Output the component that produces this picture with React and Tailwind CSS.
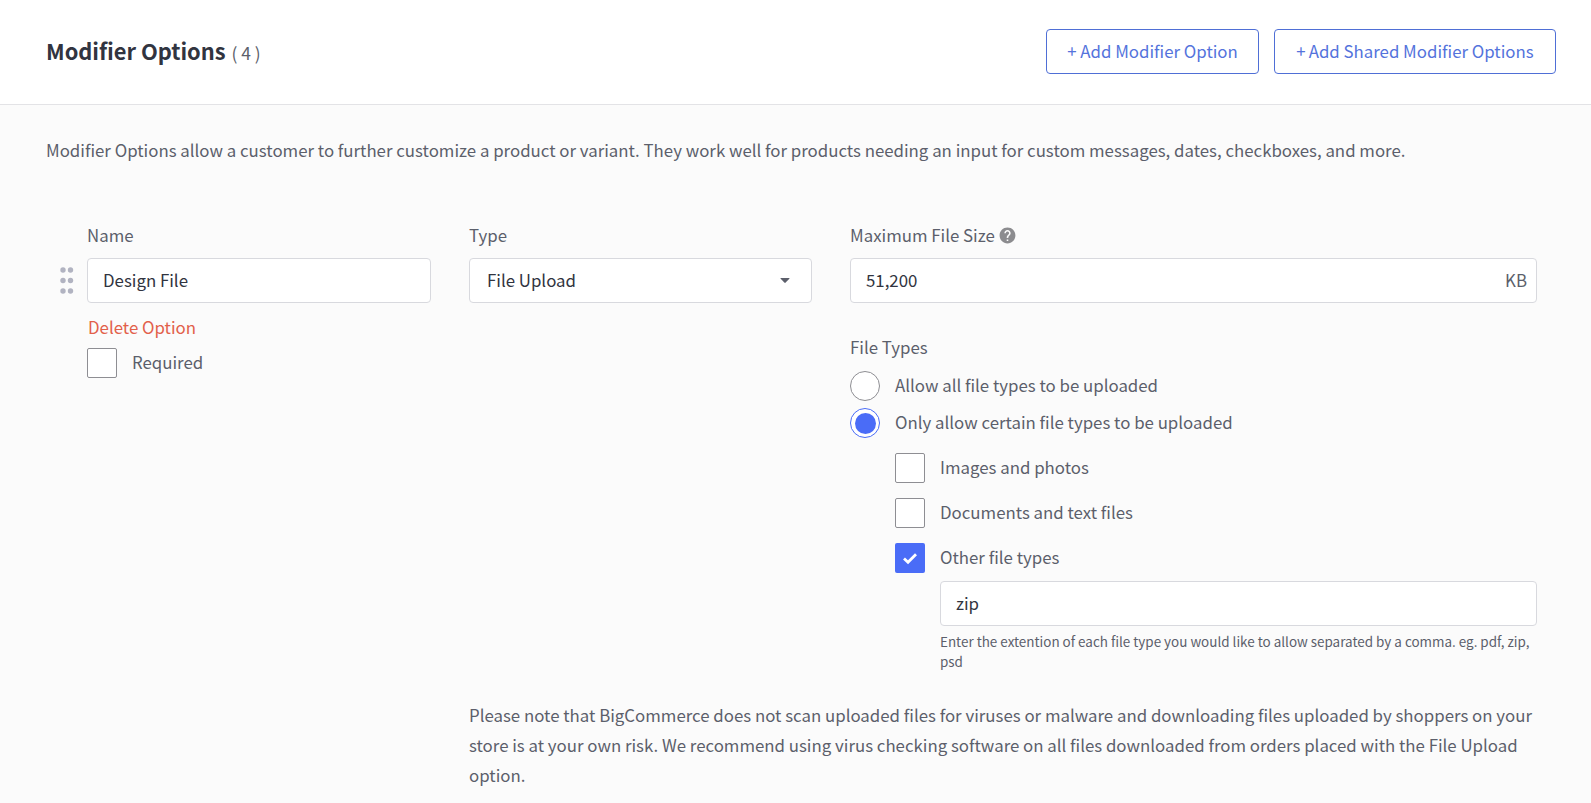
import { MdHelp } from 'react-icons/md';

const TextInput = ({ value, suffix, className = '' }) => (
  <div className={`flex items-center justify-between h-[45px] bg-white border border-[#d8d9de] rounded-[4px] pl-[15px] pr-[9px] text-[#313440] ${className}`}>
    <span className="pb-[2px]">{value}</span>
    {suffix && <span className="pb-[2px] text-[#5c5f6b]">{suffix}</span>}
  </div>
);

const Checkbox = ({ label, checked = false }) => (
  <div className="flex items-center h-[30px] gap-[15px]">
    {checked ? (
      <div className="w-[30px] h-[30px] rounded-[2px] bg-[#4a6cf7] flex items-center justify-center">
        <svg width="16" height="13" viewBox="0 0 16 13" fill="none">
          <path d="M2 6.5 L6 10.2 L14 2.2" stroke="white" strokeWidth="2.8" />
        </svg>
      </div>
    ) : (
      <div className="w-[30px] h-[30px] rounded-[2px] bg-white border border-[#8e8e93]" />
    )}
    <span className="pb-[2px]">{label}</span>
  </div>
);

const Radio = ({ label, selected = false }) => (
  <div className="flex items-center h-[30px] gap-[15px]">
    {selected ? (
      <div className="w-[30px] h-[30px] rounded-full bg-white border border-[#4a6cf7] flex items-center justify-center">
        <div className="w-[21px] h-[21px] rounded-full bg-[#4a6cf7]" />
      </div>
    ) : (
      <div className="w-[30px] h-[30px] rounded-full bg-white border border-[#8e8e93]" />
    )}
    <span className="pb-[2px]">{label}</span>
  </div>
);

const DragHandle = () => (
  <svg width="14" height="27" viewBox="0 0 14 27" fill="#b1b3c1" className="ml-[1px]">
    <circle cx="3" cy="3" r="2.7" />
    <circle cx="10.5" cy="3" r="2.7" />
    <circle cx="3" cy="13.5" r="2.7" />
    <circle cx="10.5" cy="13.5" r="2.7" />
    <circle cx="3" cy="24" r="2.7" />
    <circle cx="10.5" cy="24" r="2.7" />
  </svg>
);

export default function App() {
  return (
    <div className="h-[803px] overflow-hidden bg-[#fbfbfb] text-[16.84px] leading-[30px] text-[#5c5f6b] font-['Noto_Sans_CJK_SC','Noto_Sans',sans-serif]">
      {/* Header */}
      <div className="h-[105px] bg-white border-b border-[#e3e3e6] pl-[46px] pr-[35px] flex items-center justify-between">
        <div className="flex items-baseline gap-[6px]">
          <h1 className="text-[21.85px] font-semibold text-[#313440]">Modifier Options</h1>
          <span className="text-[17.4px]">( 4 )</span>
        </div>
        <div className="flex gap-[15px] -mt-[1px]">
          <button className="w-[213px] h-[45px] pb-[2px] bg-white border border-[#4f6fd6] rounded-[4px] text-[#5473dc]">+ Add Modifier Option</button>
          <button className="w-[282px] h-[45px] pb-[2px] bg-white border border-[#4f6fd6] rounded-[4px] text-[#5473dc]">+<span className="ml-[3px]">Add Shared Modifier Options</span></button>
        </div>
      </div>

      <div className="pl-[46px] pr-[54px]">
        <p className="pt-[30px]">
          Modifier Options allow a customer to further customize a product or variant. They work well for products needing an input for custom messages, dates, checkboxes, and more.
        </p>

        <div className="mt-[55px] ml-[41px] grid grid-cols-[344px_343px_1fr] gap-x-[38px]">
          {/* Name */}
          <div>
            <div className="mb-[8px]">Name</div>
            <div className="flex items-center -ml-[28px]">
              <div className="w-[28px] shrink-0">
                <DragHandle />
              </div>
              <TextInput value="Design File" className="flex-1" />
            </div>
            <div className="mt-[9px] pl-[1px] text-[#e2604a]">Delete Option</div>
            <div className="mt-[6px]">
              <Checkbox label="Required" />
            </div>
          </div>

          {/* Type */}
          <div>
            <div className="mb-[8px]">Type</div>
            <div className="flex items-center justify-between h-[45px] bg-white border border-[#d8d9de] rounded-[4px] pl-[17px] pr-[21px] text-[#313440]">
              <span className="pb-[2px]">File Upload</span>
              <svg width="10" height="7" viewBox="0 0 12 7" fill="#5c5f6b">
                <path d="M1 0.5 H11 Q11.8 0.5 11.2 1.3 L6.8 6 Q6 6.8 5.2 6 L0.8 1.3 Q0.2 0.5 1 0.5 Z" />
              </svg>
            </div>
          </div>

          {/* Maximum File Size + File Types */}
          <div>
            <div className="mb-[8px] flex items-center gap-[3px]">
              Maximum File Size
              <MdHelp size={19} className="text-[#8c8c8f]" />
            </div>
            <TextInput value="51,200" suffix="KB" />

            <div className="mt-[29px]">File Types</div>
            <div className="mt-[9px] flex flex-col gap-[7px]">
              <Radio label="Allow all file types to be uploaded" />
              <Radio label="Only allow certain file types to be uploaded" selected />
            </div>
            <div className="mt-[15px] pl-[45px] flex flex-col gap-[15px]">
              <Checkbox label="Images and photos" />
              <Checkbox label="Documents and text files" />
              <Checkbox label="Other file types" checked />
            </div>
            <div className="mt-[8px] pl-[90px]">
              <TextInput value="zip" />
              <p className="mt-[5px] text-[13.45px] leading-[20px]">
                Enter the extention of each file type you would like to allow separated by a comma. eg. pdf, zip, psd
              </p>
            </div>
          </div>

          <p className="col-start-2 col-span-2 mt-[29px]">
            Please note that BigCommerce does not scan uploaded files for viruses or malware and downloading files uploaded by shoppers on your store is at your own risk. We recommend using virus checking software on all files downloaded from orders placed with the File Upload option.
          </p>
        </div>
      </div>
    </div>
  );
}
